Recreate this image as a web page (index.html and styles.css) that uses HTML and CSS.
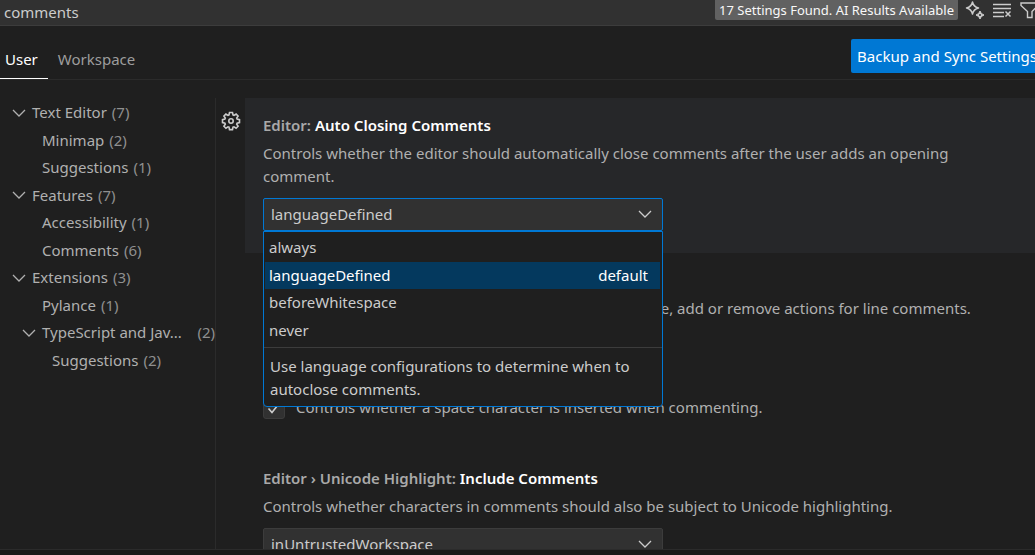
FILE: index.html
```html
<!DOCTYPE html>
<html lang="en">
<head>
<meta charset="utf-8">
<title>Settings</title>
<link rel="stylesheet" href="styles.css">
</head>
<body>
<svg class="sprite" aria-hidden="true">
  <symbol id="chevron" viewBox="0 0 16 16"><path d="M2 5l6 6 6-6" fill="none" stroke="currentColor" stroke-width="1.3"/></symbol>
  <symbol id="check" viewBox="0 0 16 16"><path d="M2.5 8.5l3.5 4 7.500-9.500" fill="none" stroke="currentColor" stroke-width="1.6"/></symbol>
</svg>

<header class="search">
  <input class="search-input" type="text" value="comments" aria-label="Search settings">
  <span class="count">17 Settings Found. AI Results Available</span>
  <button class="icon-button" aria-label="Toggle AI results">
    <svg viewBox="0 0 20 20"><path d="M7.500 2Q8.500 6.800 13.500 8Q8.500 9.200 7.500 14Q6.500 9.200 1.500 8Q6.500 6.800 7.500 2z" fill="none" stroke="currentColor" stroke-width="1.500" stroke-linejoin="round"/><path d="M15 11Q15.700 14 19 15Q15.700 16 15 19Q14.300 16 11 15Q14.300 14 15 11z" fill="currentColor" stroke="currentColor" stroke-linejoin="round"/><circle cx="15" cy="15" r="1" fill="#313131"/></svg>
  </button>
  <button class="icon-button" aria-label="Clear search">
    <svg viewBox="0 0 20 20"><path d="M1 4.500h18M1 8.500h18M1 12.500h11M1 16.500h11" fill="none" stroke="currentColor" stroke-width="1.300"/><path d="M13.500 11.500l5 5M18.500 11.500l-5 5" fill="none" stroke="currentColor" stroke-width="1.500"/></svg>
  </button>
  <button class="icon-button" aria-label="Filter settings">
    <svg viewBox="0 0 20 20"><path d="M2 3h17v2.500l-6 6V17.500H8.500V11.500L2 5.500z" fill="none" stroke="currentColor" stroke-width="1.400"/></svg>
  </button>
</header>

<div class="scope">
  <nav class="tabs">
    <button class="tab tab-active">User</button>
    <button class="tab">Workspace</button>
  </nav>
  <button class="sync">Backup and Sync Settings</button>
</div>

<div class="body">
  <nav class="sidebar" aria-label="Settings groups">
    <ul class="tree">
      <li class="node"><svg class="twisty"><use href="#chevron"/></svg><span class="label">Text Editor</span><span class="num">(7)</span></li>
      <li class="node leaf"><span class="label">Minimap</span><span class="num">(2)</span></li>
      <li class="node leaf"><span class="label">Suggestions</span><span class="num">(1)</span></li>
      <li class="node"><svg class="twisty"><use href="#chevron"/></svg><span class="label">Features</span><span class="num">(7)</span></li>
      <li class="node leaf"><span class="label">Accessibility</span><span class="num">(1)</span></li>
      <li class="node leaf"><span class="label">Comments</span><span class="num">(6)</span></li>
      <li class="node"><svg class="twisty"><use href="#chevron"/></svg><span class="label">Extensions</span><span class="num">(3)</span></li>
      <li class="node leaf"><span class="label">Pylance</span><span class="num">(1)</span></li>
      <li class="node nested"><svg class="twisty"><use href="#chevron"/></svg><span class="label">TypeScript and Jav...</span><span class="num">(2)</span></li>
      <li class="node leaf deep"><span class="label">Suggestions</span><span class="num">(2)</span></li>
    </ul>
  </nav>

  <main class="settings">
    <section class="setting">
      <div class="gutter">
        <button class="gear" aria-label="More actions">
          <svg viewBox="0 0 20 20"><path d="M8.500 1.500h3l.5 2.500 1 .4 2.100-1.400 2 2-1.400 2.100.4 1 2.400.5v3l-2.400.5-.4 1 1.400 2.100-2 2-2.100-1.400-1 .4-.5 2.400h-3l-.5-2.400-1-.4-2.100 1.400-2-2 1.400-2.100-.4-1-2.400-.5v-3l2.400-.5.4-1-1.400-2.100 2-2 2.100 1.400 1-.4z" fill="none" stroke="currentColor" stroke-width="1.600"/><circle cx="10" cy="10" r="2.200" fill="none" stroke="currentColor" stroke-width="1.600"/></svg>
        </button>
      </div>
      <div class="content focused">
        <h3 class="title"><span class="category">Editor:</span> Auto Closing Comments</h3>
        <p class="description" id="d1">Controls whether the editor should automatically close comments after the user adds an opening comment.</p>
        <div class="select-box">
          <select class="select select-open" aria-labelledby="d1">
            <option>always</option><option selected>languageDefined</option><option>beforeWhitespace</option><option>never</option>
          </select>
          <svg class="arrow"><use href="#chevron"/></svg>
          <div class="dropdown">
            <ul class="options" role="listbox" aria-labelledby="d1">
              <li class="option" role="option">always</li>
              <li class="option option-selected" role="option" aria-selected="true"><span>languageDefined</span><span>default</span></li>
              <li class="option" role="option">beforeWhitespace</li>
              <li class="option" role="option">never</li>
            </ul>
            <p class="details">Use language configurations to determine when to autoclose comments.</p>
          </div>
        </div>
      </div>
    </section>

    <section class="setting">
      <div class="gutter"></div>
      <div class="content content-check">
        <h3 class="title"><span class="category">Editor › Comments:</span> Ignore Empty Lines</h3>
        <label class="check-row">
          <span class="check"><input class="check-input" type="checkbox" checked><svg class="check-mark"><use href="#check"/></svg></span>
          <span>Controls if empty lines should be ignored with toggle, add or remove actions for line comments.</span>
        </label>
      </div>
    </section>

    <section class="setting">
      <div class="gutter"></div>
      <div class="content content-check">
        <h3 class="title"><span class="category">Editor › Comments:</span> Insert Space</h3>
        <label class="check-row">
          <span class="check"><input class="check-input" type="checkbox" checked><svg class="check-mark"><use href="#check"/></svg></span>
          <span>Controls whether a space character is inserted when commenting.</span>
        </label>
      </div>
    </section>

    <section class="setting">
      <div class="gutter"></div>
      <div class="content">
        <h3 class="title"><span class="category">Editor › Unicode Highlight:</span> Include Comments</h3>
        <p class="description" id="d4">Controls whether characters in comments should also be subject to Unicode highlighting.</p>
        <div class="select-box">
          <select class="select" aria-labelledby="d4">
            <option>true</option><option>false</option><option selected>inUntrustedWorkspace</option>
          </select>
          <svg class="arrow"><use href="#chevron"/></svg>
        </div>
      </div>
    </section>
  </main>
</div>
<footer class="panel-edge"></footer>
</body>
</html>
```
FILE: styles.css
```css
* {
  box-sizing: border-box;
}

body {
  display: flex;
  flex-direction: column;
  height: 100vh;
  margin: 0;
  overflow: hidden;
  background: #1f1f1f;
  color: #b0b0b0;
  font: 15px/23px "Noto Sans", "Open Sans", sans-serif;
}

button, input, select {
  margin: 0;
  font: inherit;
}

button {
  padding: 0;
  border: 0;
  background: none;
  color: inherit;
}

ul, p, h3 {
  margin: 0;
  padding: 0;
  list-style: none;
}

.sprite {
  display: none;
}

.search {
  display: flex;
  flex: none;
  align-items: flex-start;
  gap: 7px;
  height: 26px;
  margin-right: -4px;
  border-bottom: 1px solid #3c3c3c;
  background: #313131;
}

.search-input {
  flex: 1;
  min-width: 0;
  height: 24px;
  padding: 0 4px;
  border: 0;
  outline: 0;
  background: none;
  color: #cccccc;
}

.count {
  padding: 0 4px;
  border-radius: 0 0 2px 2px;
  background: #616161;
  color: #f8f8f8;
  font-size: 13px;
  line-height: 20px;
}

.icon-button {
  width: 20px;
  height: 20px;
  color: #cccccc;
}

.icon-button svg, .gear svg {
  display: block;
  width: 20px;
  height: 20px;
}

.scope {
  display: flex;
  flex: none;
  align-items: stretch;
  justify-content: space-between;
  height: 54px;
  border-bottom: 1px solid #2b2b2b;
}

.tabs {
  display: flex;
  margin-left: -5px;
}

.tab {
  padding: 14px 10px 0;
  border-bottom: 1px solid transparent;
  color: #9d9d9d;
}

.tab-active {
  border-bottom-color: #ffffff;
  color: #ffffff;
}

.sync {
  align-self: center;
  height: 34px;
  margin: 7px -8px 0 0;
  padding: 0 6px;
  border-radius: 2px;
  background: #0078d4;
  color: #ffffff;
  white-space: nowrap;
}

.body {
  display: flex;
  flex: 1;
  min-height: 0;
  padding-top: 18px;
}

.sidebar {
  flex: none;
  width: 216px;
  border-right: 1px solid #2b2b2b;
}

.tree {
  display: grid;
  grid-template-rows: repeat(10, 1fr);
  height: 275px;
  margin-top: 1px;
}

.node {
  display: flex;
  align-items: center;
  gap: 5px;
  min-width: 0;
  padding-left: 11px;
}

.nested {
  padding-left: 21px;
}

.leaf {
  padding-left: 42px;
}

.deep {
  padding-left: 52px;
}

.twisty {
  flex: none;
  width: 16px;
  height: 16px;
}

.label {
  white-space: nowrap;
}

.nested .num {
  margin-left: auto;
}

.num {
  color: #8f8f8f;
}

.settings {
  flex: 1;
  min-width: 0;
  overflow: hidden;
}

.setting {
  display: flex;
}

.gutter {
  flex: none;
  width: 29px;
  padding: 13px 5px;
}

.gear {
  display: block;
  color: #cccccc;
}

.content {
  flex: 1;
  min-width: 0;
  padding: 16px 18px 22px;
}

.content-check {
  padding-bottom: 32px;
}

.focused {
  background: #262729;
}

.title {
  margin-bottom: 5px;
  color: #ffffff;
  font-size: 15px;
  font-weight: 600;
}

.category {
  color: #a9a9a9;
}

.description {
  max-width: 740px;
}

.select-box {
  position: relative;
  max-width: 400px;
  margin-top: 10px;
}

.select {
  display: block;
  width: 100%;
  height: 33px;
  padding: 0 7px;
  border: 1px solid #3c3c3c;
  border-radius: 2px;
  outline: 0;
  appearance: none;
  background: #313131;
  color: #cccccc;
}

.select-open {
  border-color: #0078d4;
}

.arrow {
  position: absolute;
  top: 8px;
  right: 10px;
  width: 16px;
  height: 16px;
  color: #cccccc;
  pointer-events: none;
}

.dropdown {
  position: absolute;
  z-index: 1;
  top: 100%;
  left: 0;
  right: 0;
  border: 1px solid #0078d4;
  border-radius: 0 0 4px 4px;
  background: #1f1f1f;
  color: #cccccc;
}

.options {
  display: grid;
  grid-template-rows: repeat(4, 1fr);
  height: 110px;
  margin: 2px 2px 3px 1px;
}

.option {
  display: flex;
  align-items: center;
  justify-content: space-between;
  padding: 0 12px 0 4px;
}

.option-selected {
  background: #04395e;
  color: #ffffff;
}

.details {
  padding: 7px 6px 5px;
  border-top: 1px solid #3c3c3c;
}

.check-row {
  display: flex;
  gap: 11px;
}

.check {
  display: grid;
  place-items: center;
}

.check-input, .check-mark {
  grid-area: 1 / 1;
}

.check-input {
  width: 22px;
  height: 22px;
  border: 1px solid #3c3c3c;
  border-radius: 3px;
  appearance: none;
  background: #313131;
}

.check-mark {
  width: 16px;
  height: 16px;
  color: #cccccc;
  pointer-events: none;
}

.panel-edge {
  flex: none;
  height: 6px;
  border-top: 1px solid #2b2b2b;
  background: #181818;
}
```
